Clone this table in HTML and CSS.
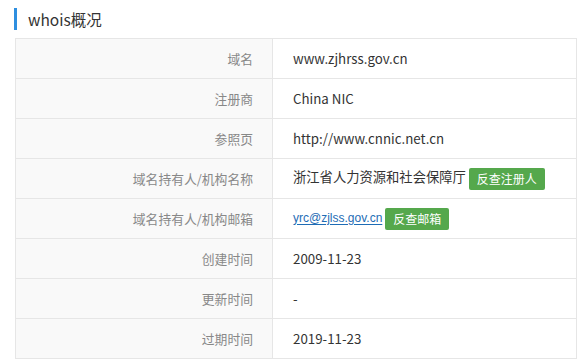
FILE: index.html
```html
<!DOCTYPE html>
<html lang="zh">
<head>
<meta charset="utf-8">
<link rel="stylesheet" href="styles.css">
</head>
<body>
<div class="panel">
  <h2 class="title">whois概况</h2>
  <table class="info">
    <tr><th>域名</th><td>www.zjhrss.gov.cn</td></tr>
    <tr><th>注册商</th><td>China NIC</td></tr>
    <tr><th>参照页</th><td>http://www.cnnic.net.cn</td></tr>
    <tr><th>域名持有人/机构名称</th><td>浙江省人力资源和社会保障厅 <a class="btn">反查注册人</a></td></tr>
    <tr><th>域名持有人/机构邮箱</th><td><a class="mail">yrc@zjlss.gov.cn</a> <a class="btn">反查邮箱</a></td></tr>
    <tr><th>创建时间</th><td>2009-11-23</td></tr>
    <tr><th>更新时间</th><td>-</td></tr>
    <tr><th>过期时间</th><td>2019-11-23</td></tr>
  </table>
</div>
</body>
</html>
```
FILE: styles.css
```css
html, body {
  margin: 0;
  padding: 0;
  background: #fff;
  font-family: "Noto Sans CJK SC", "Noto Sans", sans-serif;
}
.panel {
  padding: 8px 3px 0 14px;
}
.title {
  margin: 0;
  height: 22px;
  line-height: 22px;
  border-left: 3px solid #2e8fe0;
  padding-left: 11px;
  font-size: 15.5px;
  font-weight: normal;
  color: #333;
}
.info {
  margin-top: 8px;
  margin-left: 1px;
  width: 562px;
  border-collapse: collapse;
  border: 1px solid #e6e6e6;
}
.info th, .info td {
  height: 39px;
  padding: 0;
  border-bottom: 1px solid #e6e6e6;
}
.info th {
  width: 237px;
  padding-right: 19px;
  text-align: right;
  font-weight: normal;
  font-size: 12.8px;
  color: #888;
  background: #f9f9f9;
  border-right: 1px solid #e6e6e6;
}
.info td {
  padding-left: 20px;
  font-size: 13.3px;
  color: #333;
}
.btn {
  display: inline-block;
  background: #55a84c;
  color: #fff;
  font-size: 12px;
  line-height: 22px;
  padding: 0 8px;
  border-radius: 2px;
  vertical-align: middle;
  margin-left: 0;
}
.mail {
  color: #1e6cb5;
  font-family: "Liberation Sans", sans-serif;
  font-size: 12px;
  text-decoration: underline;
  vertical-align: middle;
}
```
